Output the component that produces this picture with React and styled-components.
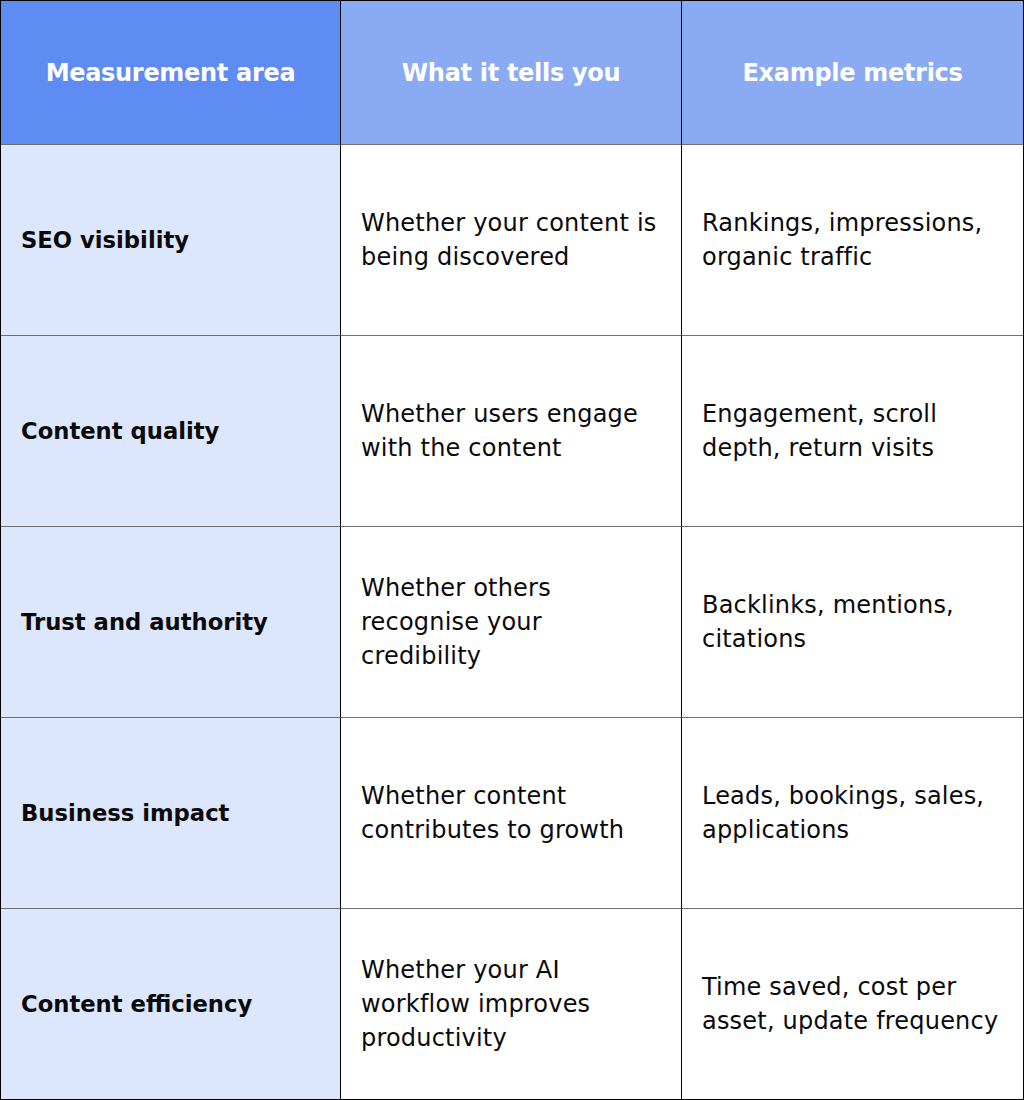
import React from "react";
import styled, { createGlobalStyle } from "styled-components";

const GlobalStyle = createGlobalStyle`
  body {
    margin: 0;
    background: #ffffff;
    font-family: "DejaVu Sans", "Open Sans", sans-serif;
  }
`;

const rows = [
  ["SEO visibility", ["Whether your content is", "being discovered"], ["Rankings, impressions,", "organic traffic"]],
  ["Content quality", ["Whether users engage", "with the content"], ["Engagement, scroll", "depth, return visits"]],
  ["Trust and authority", ["Whether others", "recognise your", "credibility"], ["Backlinks, mentions,", "citations"]],
  ["Business impact", ["Whether content", "contributes to growth"], ["Leads, bookings, sales,", "applications"]],
  ["Content efficiency", ["Whether your AI", "workflow improves", "productivity"], ["Time saved, cost per", "asset, update frequency"]],
];

const Table = styled.div`
  width: 1024px;
  height: 1100px;
  box-sizing: border-box;
  border: 1px solid #000;
  display: grid;
  grid-template-columns: 340px 341px 341px;
  grid-template-rows: 143px repeat(5, 191px);
`;

const HeadCell = styled.div`
  display: flex;
  align-items: center;
  justify-content: center;
  background: ${(p) => (p.$first ? "#5f8cf3" : "#8aabf4")};
  border-right: ${(p) => (p.$last ? "none" : "1px solid #000")};
  color: #ffffff;
  font-weight: 700;
  font-size: 24px;
  letter-spacing: -0.3px;
`;

const Cell = styled.div`
  display: flex;
  flex-direction: column;
  justify-content: center;
  box-sizing: border-box;
  padding: 0 20px;
  border-top: 1px solid #6f6f6f;
  border-right: ${(p) => (p.$last ? "none" : "1px solid #000")};
  background: ${(p) => (p.$label ? "#dce6fd" : "#ffffff")};
  color: #0a0a0a;
  font-size: ${(p) => (p.$label ? "22.7px" : "24px")};
  line-height: 34px;
  font-weight: ${(p) => (p.$label ? 700 : 400)};
  letter-spacing: ${(p) => (p.$label ? "0" : "0.2px")};
`;

const Line = styled.span`
  display: block;
  white-space: nowrap;
`;

export default function App() {
  return (
    <>
      <GlobalStyle />
      <Table>
        <HeadCell $first>Measurement area</HeadCell>
        <HeadCell>What it tells you</HeadCell>
        <HeadCell $last>Example metrics</HeadCell>
        {rows.map(([area, tells, metrics]) => (
          <React.Fragment key={area}>
            <Cell $label>{area}</Cell>
            <Cell>
              {tells.map((t) => (
                <Line key={t}>{t}</Line>
              ))}
            </Cell>
            <Cell $last>
              {metrics.map((t) => (
                <Line key={t}>{t}</Line>
              ))}
            </Cell>
          </React.Fragment>
        ))}
      </Table>
    </>
  );
}
